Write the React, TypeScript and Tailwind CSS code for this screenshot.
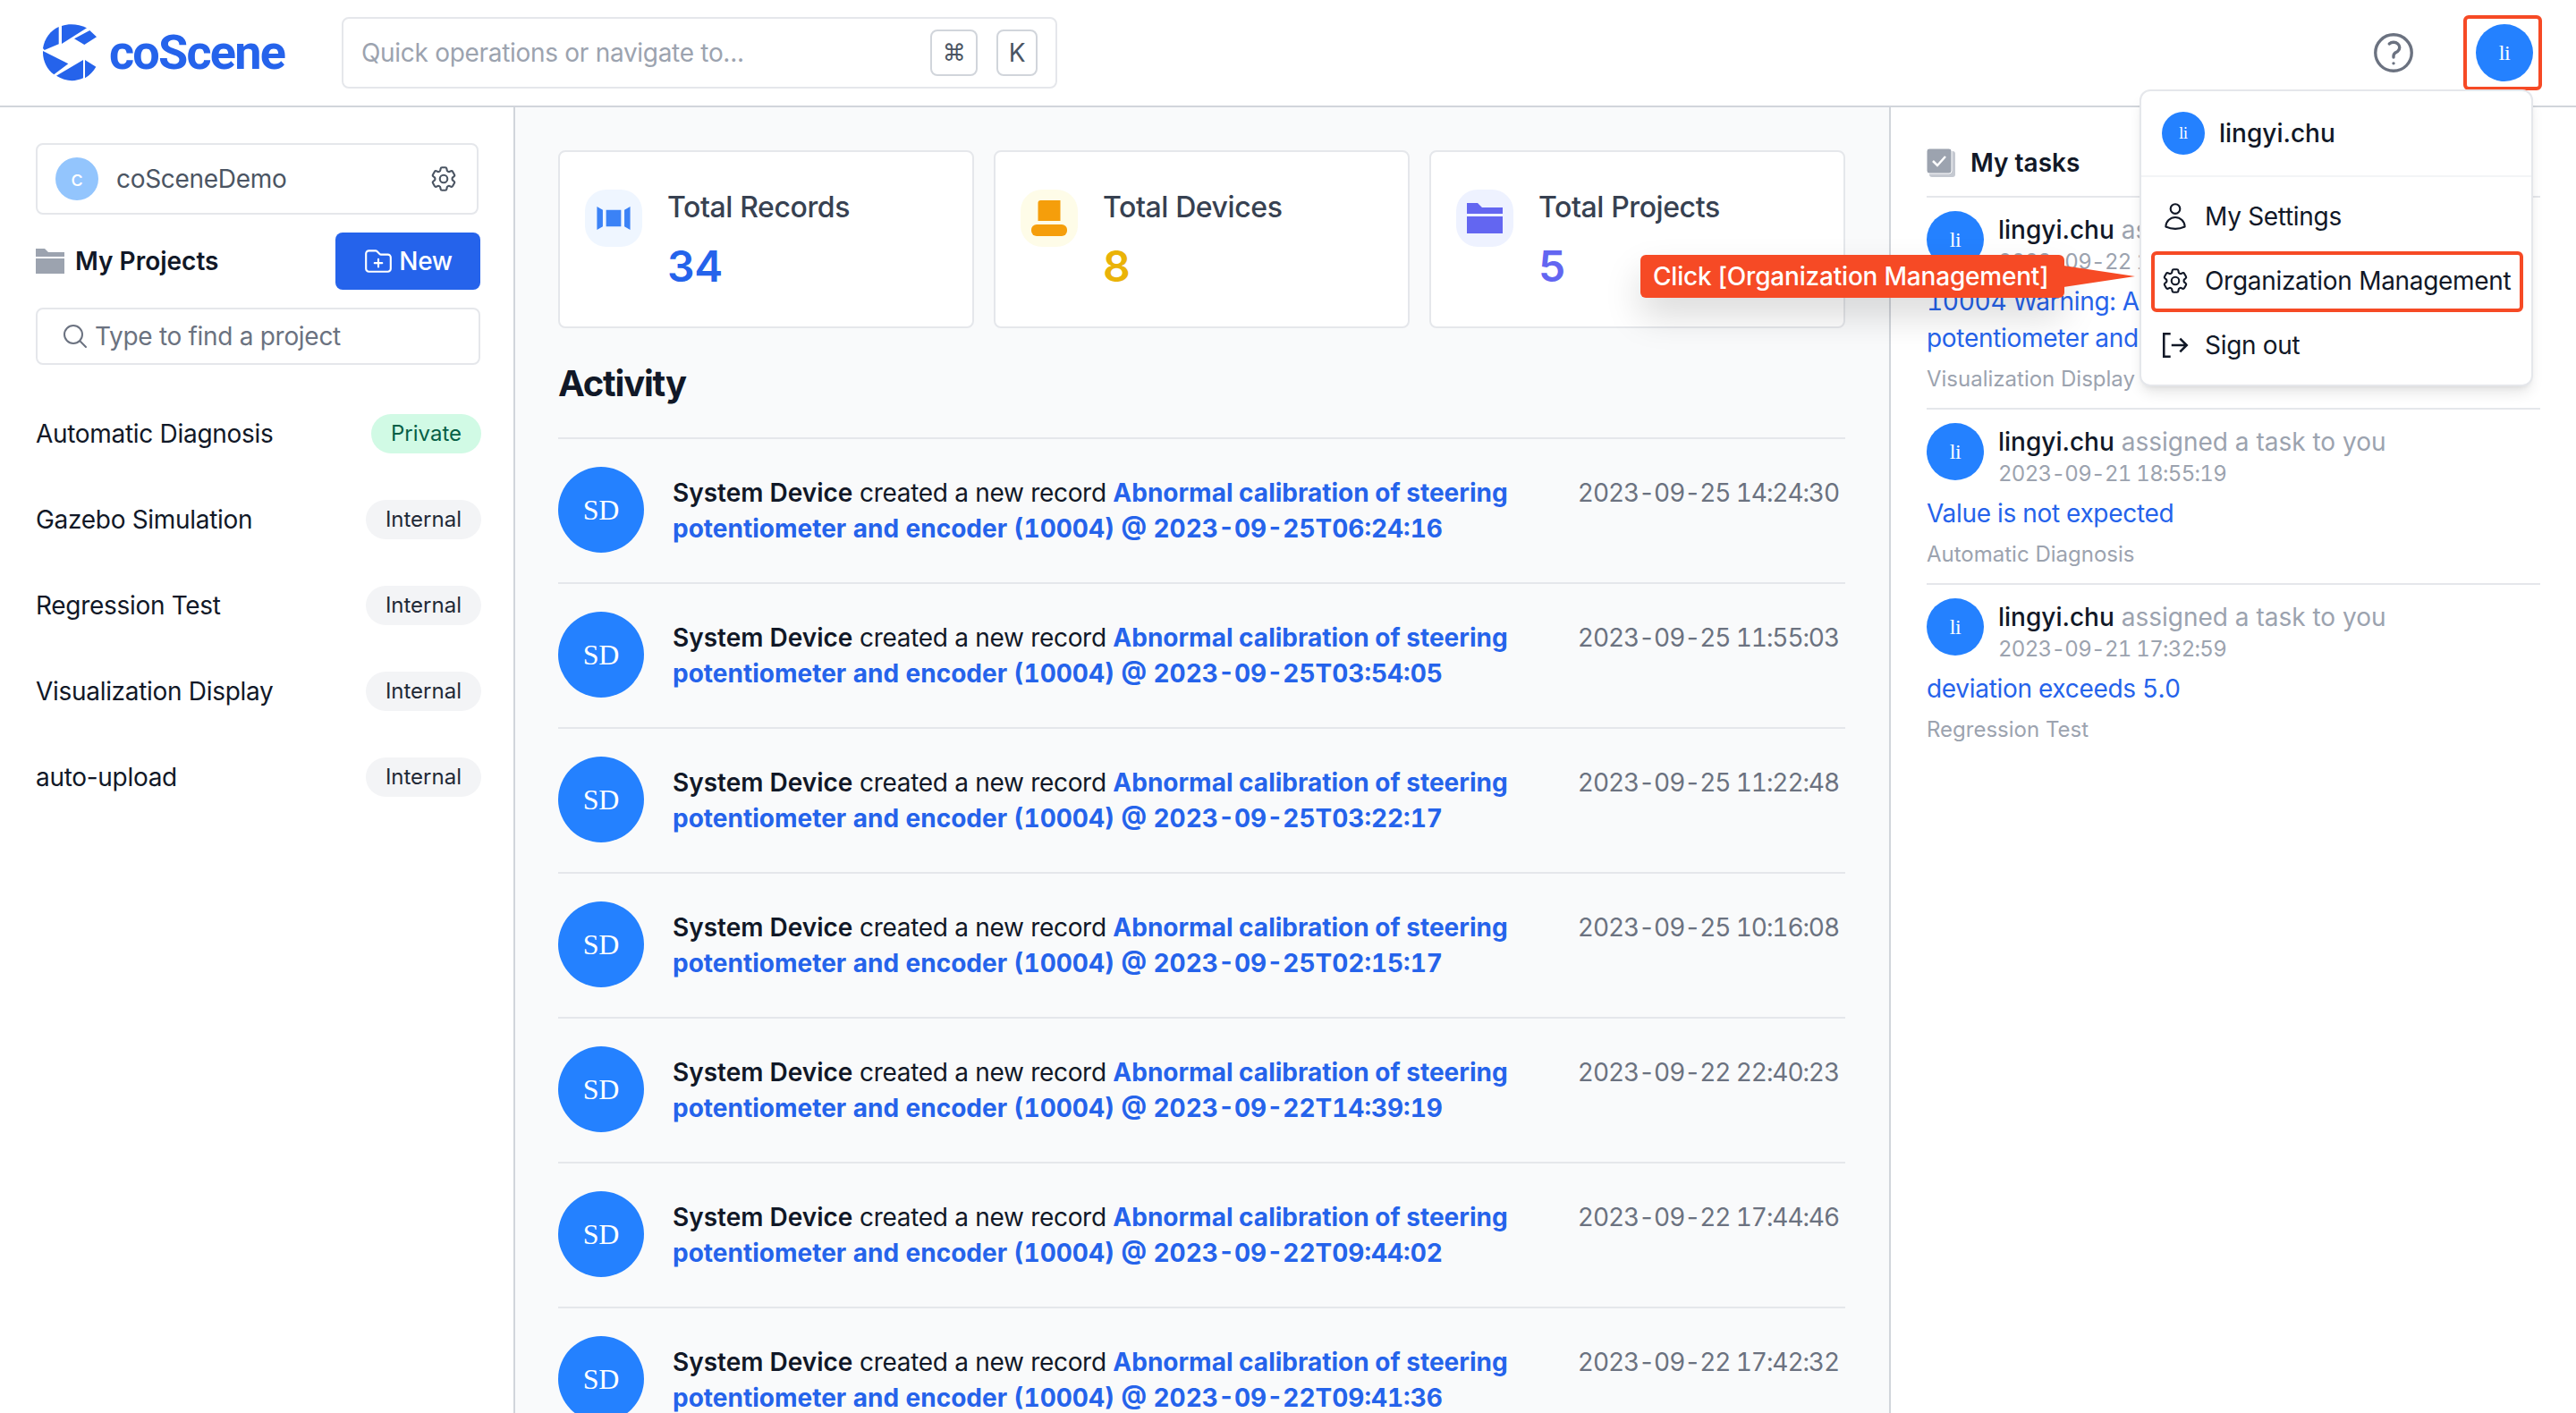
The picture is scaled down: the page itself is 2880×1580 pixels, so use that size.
import {
  HiOutlineCog6Tooth,
  HiOutlineFolderPlus,
  HiOutlineMagnifyingGlass,
  HiOutlineQuestionMarkCircle,
  HiOutlineUser,
} from "react-icons/hi2";

const projects = [
  { name: "Automatic Diagnosis", scope: "Private" },
  { name: "Gazebo Simulation", scope: "Internal" },
  { name: "Regression Test", scope: "Internal" },
  { name: "Visualization Display", scope: "Internal" },
  { name: "auto-upload", scope: "Internal" },
];

const activity = [
  { time: "2023-09-25 14:24:30", stamp: "2023-09-25T06:24:16" },
  { time: "2023-09-25 11:55:03", stamp: "2023-09-25T03:54:05" },
  { time: "2023-09-25 11:22:48", stamp: "2023-09-25T03:22:17" },
  { time: "2023-09-25 10:16:08", stamp: "2023-09-25T02:15:17" },
  { time: "2023-09-22 22:40:23", stamp: "2023-09-22T14:39:19" },
  { time: "2023-09-22 17:44:46", stamp: "2023-09-22T09:44:02" },
  { time: "2023-09-22 17:42:32", stamp: "2023-09-22T09:41:36" },
];

const tasks = [
  {
    date: "2023-09-22 10:30:11",
    title: "10004 Warning: Abnormal calibration of steering potentiometer and encoder",
    project: "Visualization Display",
  },
  { date: "2023-09-21 18:55:19", title: "Value is not expected", project: "Automatic Diagnosis" },
  { date: "2023-09-21 17:32:59", title: "deviation exceeds 5.0", project: "Regression Test" },
];

const Logo = () => (
  <svg viewBox="55 38 180 190" className="h-[64px] w-[60px] shrink-0" fill="#2563eb">
    <path d="M55 118 C60 85 80 58 108 46 L108 104 L60 124 Z" />
    <path d="M118 43 C146 34 176 38 202 50 L118 103 Z" />
    <path d="M212 58 L235 80 L194 106 L160 86 Z" />
    <path d="M55 127 L140 170 L92 206 C68 188 54 160 55 127 Z" />
    <path d="M100 210 L190 157 L190 218 C160 232 128 228 100 210 Z" />
    <path d="M196 157 L233 180 C224 196 212 208 196 218 Z" />
  </svg>
);

const Avatar = ({ label, size }: { label: string; size: string }) => (
  <div className={`flex shrink-0 items-center justify-center rounded-full bg-[#2481ff] font-['Liberation_Serif',serif] text-white ${size}`}>
    {label}
  </div>
);

const StatCard = ({
  title,
  value,
  valueColor,
  iconBg,
  children,
}: {
  title: string;
  value: string;
  valueColor: string;
  iconBg: string;
  children: React.ReactNode;
}) => (
  <div className="flex h-[199px] flex-1 items-start gap-[28px] rounded-lg border-2 border-[#e5e7eb] bg-white pt-[42px] pl-[28px]">
    <div className={`flex h-[64px] w-[64px] shrink-0 items-center justify-center rounded-[24px] ${iconBg}`}>{children}</div>
    <div>
      <p className="text-[32px] leading-[40px] font-medium tracking-[-0.4px] text-[#374151]">{title}</p>
      <p className={`mt-[18px] text-[48px] leading-[56px] font-semibold ${valueColor}`}>{value}</p>
    </div>
  </div>
);

const App = () => {
  return (
    <div className="relative flex h-[1580px] w-[2880px] flex-col overflow-hidden bg-white font-['Inter',sans-serif] text-[28px] tracking-[-0.3px] text-[#111827]">
      {/* Top bar */}
      <header className="flex h-[120px] shrink-0 items-center border-b-2 border-[#d1d5db] bg-white pr-[48px] pl-[48px]">
        <div className="flex w-[334px] items-center gap-[14px]">
          <Logo />
          <span className="font-['Roboto',sans-serif] text-[54px] leading-none font-bold tracking-[-1.8px] text-[#2563eb]">coScene</span>
        </div>
        <div className="flex h-[80px] w-[800px] items-center justify-between rounded-lg border-2 border-[#e5e7eb] pr-[20px] pl-[20px]">
          <span className="text-[#9ca3af]">Quick operations or navigate to...</span>
          <div className="flex items-center gap-[21px]">
            <kbd className="flex h-[52px] w-[53px] items-center justify-center rounded-lg border-2 border-[#d1d5db] font-['DejaVu_Sans',sans-serif] text-[26px] text-[#4b5563]">⌘</kbd>
            <kbd className="flex h-[52px] w-[46px] items-center justify-center rounded-lg border-2 border-[#d1d5db] font-['Inter',sans-serif] text-[#4b5563]">K</kbd>
          </div>
        </div>
        <div className="ml-auto flex items-center gap-[65px]">
          <HiOutlineQuestionMarkCircle className="h-[54px] w-[54px] text-[#6b7280]" />
          <Avatar label="li" size="h-[64px] w-[64px] text-[24px]" />
        </div>
      </header>

      <div className="flex min-h-0 flex-1">
        {/* Left column */}
        <aside className="w-[576px] shrink-0 border-r-2 border-[#d1d5db] pt-[40px] pr-[37px] pl-[40px]">
          <div className="mr-[2px] flex h-[80px] items-center rounded-lg border-2 border-[#e5e7eb] pr-[20px] pl-[20px]">
            <div className="flex h-[48px] w-[48px] items-center justify-center rounded-full bg-[#93c5fd] text-[24px] text-white">c</div>
            <span className="ml-[20px] text-[#4b5563]">coSceneDemo</span>
            <HiOutlineCog6Tooth className="ml-auto h-[34px] w-[34px] text-[#4b5563]" />
          </div>
          <div className="mt-[20px] flex h-[64px] items-center">
            <svg viewBox="0 0 32 28" className="h-[28px] w-[32px]" fill="#9ca3af">
              <path d="M0 0H10L14 4H32V9H0ZM0 11H32V28H0Z" />
            </svg>
            <span className="ml-[12px] font-semibold tracking-normal">My Projects</span>
            <button className="ml-auto flex h-[64px] w-[162px] items-center justify-center gap-[6px] rounded-lg bg-[#2563eb] font-medium text-white">
              <HiOutlineFolderPlus className="h-[34px] w-[34px]" />
              New
            </button>
          </div>
          <div className="mt-[20px] flex h-[64px] items-center gap-[6px] rounded-lg border-2 border-[#e5e7eb] pl-[26px]">
            <HiOutlineMagnifyingGlass className="h-[32px] w-[32px] text-[#6b7280]" />
            <span className="text-[#6b7280]">Type to find a project</span>
          </div>
          <ul className="mt-[29px] -mr-[1px]">
            {projects.map((p) => (
              <li key={p.name} className="flex h-[96px] items-center justify-between">
                <span>{p.name}</span>
                <span
                  className={
                    p.scope === "Private"
                      ? "flex h-[44px] items-center rounded-full bg-[#d1fae5] px-[22px] text-[24px] tracking-normal text-[#065f46]"
                      : "flex h-[44px] items-center rounded-full bg-[#f3f4f6] px-[22px] text-[24px] tracking-normal text-[#1f2937]"
                  }
                >
                  {p.scope}
                </span>
              </li>
            ))}
          </ul>
        </aside>

        {/* Main column */}
        <main className="w-[1538px] shrink-0 overflow-hidden border-r-2 border-[#d1d5db] bg-[#f9fafb] pt-[48px] pr-[49px] pl-[48px]">
          <div className="flex gap-[22px]">
            <StatCard title="Total Records" value="34" valueColor="text-[#2563eb]" iconBg="bg-[#eff6ff]">
              <svg viewBox="0 0 40 28" className="h-[26px] w-[40px]" fill="#3b82f6">
                <path d="M0 0L7 4V24L0 28ZM40 0L33 4V24L40 28ZM11 4H29V24H11Z" />
              </svg>
            </StatCard>
            <StatCard title="Total Devices" value="8" valueColor="text-[#eab308]" iconBg="bg-[#fefce8]">
              <svg viewBox="0 0 40 40" className="h-[40px] w-[40px]" fill="#f59e0b">
                <path d="M9 0H31V23H6V3Q6 0 9 0Z" transform="translate(1.5 0)" />
                <rect x="0" y="27" width="40" height="13" rx="6" />
              </svg>
            </StatCard>
            <StatCard title="Total Projects" value="5" valueColor="text-[#6366f1]" iconBg="bg-[#eef2ff]">
              <svg viewBox="0 0 40 34" className="h-[34px] w-[40px]" fill="#6366f1">
                <path d="M0 0H12L17 5H40V12H0ZM0 15H40V34H0Z" />
              </svg>
            </StatCard>
          </div>

          <h2 className="mt-[40px] text-[40px] leading-[44px] font-bold tracking-[-1.2px]">Activity</h2>
          <div className="mt-[38px] border-t-2 border-[#e5e7eb]">
            {activity.map((a) => (
              <div key={a.stamp} className="flex h-[162px] items-start border-b-2 border-[#e5e7eb] pt-[31px]">
                <Avatar label="SD" size="h-[96px] w-[96px] text-[32px]" />
                <div className="ml-[32px] w-[950px] pt-[9px] leading-[40px] whitespace-nowrap">
                  <p>
                    <span className="font-semibold tracking-normal">System Device</span> created a new record{" "}
                    <span className="font-bold tracking-normal text-[#2563eb]">Abnormal calibration of steering</span>
                  </p>
                  <p className="font-bold tracking-normal text-[#2563eb] tabular-nums">potentiometer and encoder (10004) @ {a.stamp}</p>
                </div>
                <span className="ml-auto pt-[9px] pr-[7px] leading-[40px] tracking-[-1.1px] text-[#6b7280] tabular-nums">{a.time}</span>
              </div>
            ))}
          </div>
        </main>

        {/* Right column */}
        <aside className="flex-1 bg-white pt-[40px] pr-[40px] pl-[40px]">
          <div className="flex h-[44px] items-center">
            <svg viewBox="0 0 32 32" className="h-[32px] w-[32px]">
              <rect x="3" y="3" width="29" height="29" rx="3" fill="#c5c9d1" />
              <rect x="0" y="0" width="28" height="28" rx="3" fill="#9ca3af" stroke="#fff" strokeWidth="1" />
              <path d="M7 14L12 19L21 9" fill="none" stroke="#fff" strokeWidth="2.5" />
            </svg>
            <span className="ml-[17px] font-semibold tracking-normal">My tasks</span>
          </div>
          <div className="mt-[15px] border-t-2 border-[#e5e7eb]">
            {tasks.map((t) => (
              <div key={t.date} className="border-b-2 border-[#e5e7eb] pt-[15px] pb-[16px] last:border-b-0">
                <div className="flex gap-[16px]">
                  <Avatar label="li" size="h-[64px] w-[64px] text-[24px]" />
                  <div className="pt-[3px] tracking-normal">
                    <p className="leading-[36px]">
                      <span className="font-medium">lingyi.chu</span> <span className="text-[#9ca3af]">assigned a task to you</span>
                    </p>
                    <p className="text-[24px] leading-[36px] tracking-[-0.7px] text-[#9ca3af] tabular-nums">{t.date}</p>
                  </div>
                </div>
                <p className="mt-[6px] leading-[41px] text-[#2563eb] tabular-nums">{t.title}</p>
                <p className="mt-[9px] text-[24px] leading-[32px] tracking-normal text-[#9ca3af]">{t.project}</p>
              </div>
            ))}
          </div>
        </aside>
      </div>

      {/* Avatar highlight */}
      <div className="absolute top-[17px] left-[2754px] h-[84px] w-[88px] rounded-md border-4 border-[#f64a25]" />

      {/* User menu */}
      <div className="absolute top-[100px] left-[2392px] h-[332px] w-[440px] rounded-xl border-2 border-[#e5e7eb] bg-white shadow-lg">
        <div className="flex h-[96px] items-center gap-[16px] border-b-2 border-[#f3f4f6] pl-[23px]">
          <Avatar label="li" size="h-[48px] w-[48px] text-[18px]" />
          <span className="font-medium tracking-normal">lingyi.chu</span>
        </div>
        <div className="pt-[8px]">
          <div className="flex h-[72px] items-center gap-[16px] pl-[21px]">
            <HiOutlineUser className="h-[34px] w-[34px]" />
            <span>My Settings</span>
          </div>
          <div className="flex h-[72px] items-center gap-[16px] pl-[21px]">
            <HiOutlineCog6Tooth className="h-[34px] w-[34px]" />
            <span>Organization Management</span>
          </div>
          <div className="flex h-[72px] items-center gap-[16px] pl-[21px]">
            <svg viewBox="0 0 32 32" className="h-[34px] w-[34px]" fill="none" stroke="currentColor" strokeWidth="2.4">
              <path d="M11 4H4V28H11M12 16H28M21 9L28 16L21 23" />
            </svg>
            <span>Sign out</span>
          </div>
        </div>
      </div>

      {/* Menu item highlight */}
      <div className="absolute top-[281px] left-[2405px] h-[68px] w-[416px] rounded-md border-4 border-[#f64a25]" />

      {/* Callout */}
      <div className="absolute top-[285px] left-[1834px] flex h-[48px] w-[474px] items-center rounded-md bg-[#f64a25] pl-[14px] font-medium tracking-[-0.2px] text-white shadow-[0_20px_40px_rgba(0,0,0,0.15)]">
        Click [Organization Management]
      </div>
      <svg viewBox="0 0 80 24" className="absolute top-[297px] left-[2307px] h-[24px] w-[80px]" fill="#f64a25">
        <path d="M0 0L80 12L0 24Z" />
      </svg>
    </div>
  );
};

export default App;
